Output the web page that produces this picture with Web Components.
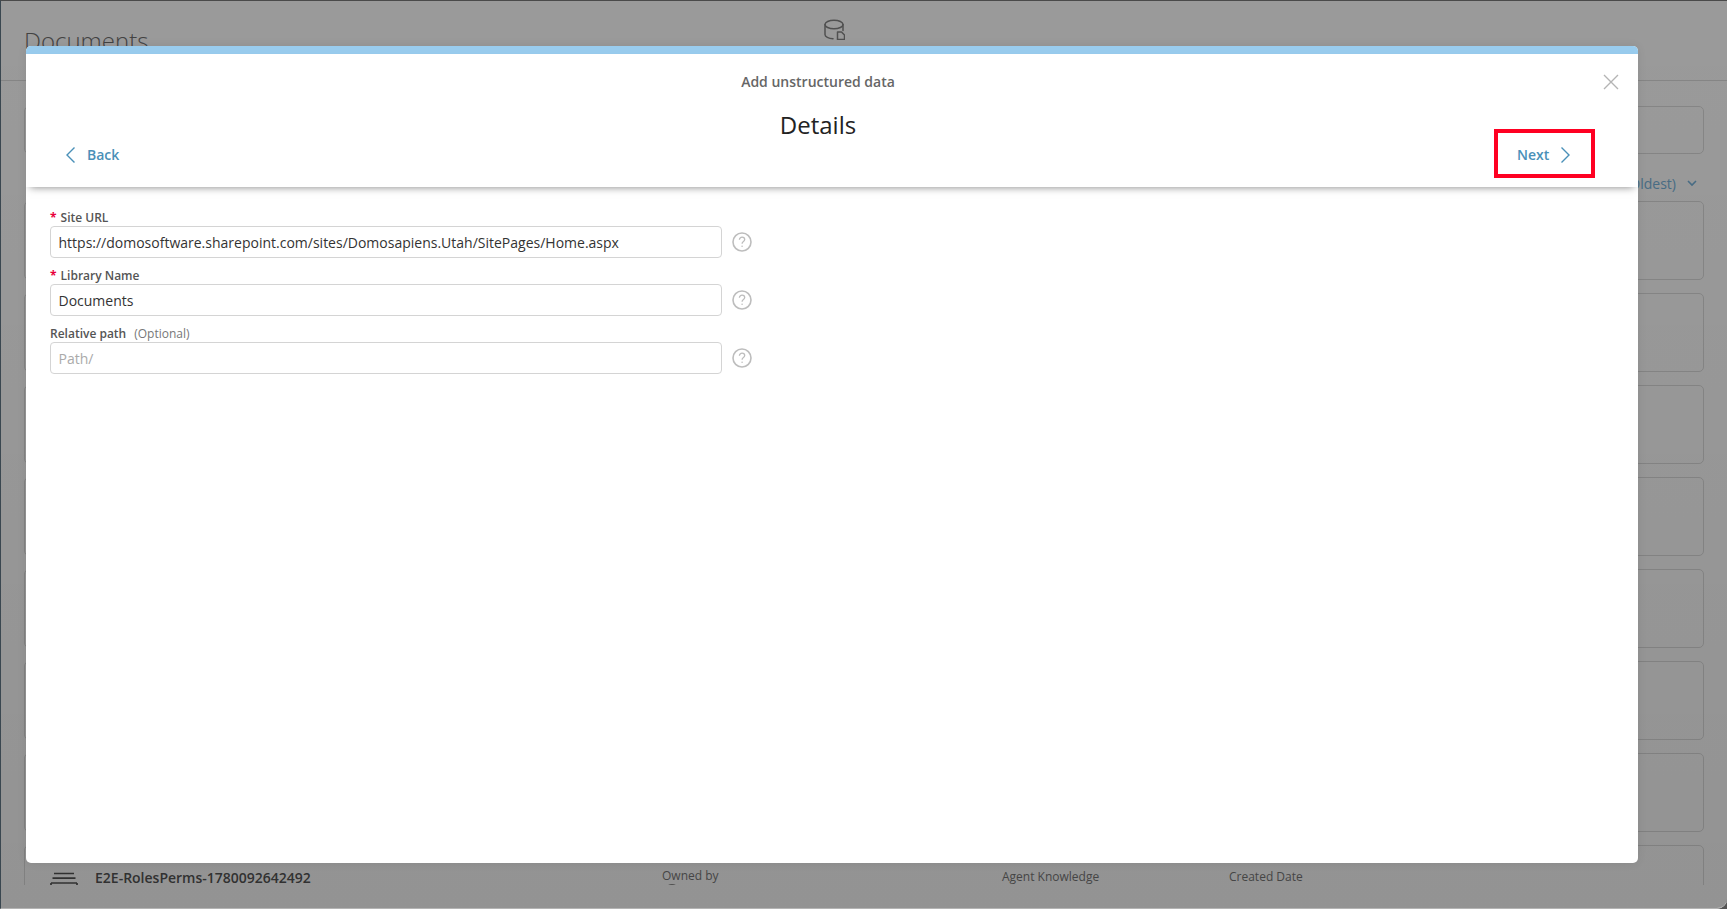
<!DOCTYPE html>
<html lang="en">
<head>
<meta charset="utf-8">
<title>Add unstructured data</title>
<style>
html,body{margin:0;padding:0;height:100%;overflow:hidden;background:#555;font-family:"Open Sans","Liberation Sans",sans-serif}
</style>
</head>
<body>
<app-window>
  <bg-page slot="page"></bg-page>
  <modal-dialog slot="modal" heading="Add unstructured data" title-text="Details">
    <form-field label="Site URL" required value="https://domosoftware.sharepoint.com/sites/Domosapiens.Utah/SitePages/Home.aspx"></form-field>
    <form-field label="Library Name" required value="Documents"></form-field>
    <form-field label="Relative path" optional="(Optional)" placeholder="Path/"></form-field>
  </modal-dialog>
</app-window>
<script>
function def(name, css, html){
  customElements.define(name, class extends HTMLElement{
    connectedCallback(){
      if(this.shadowRoot) return;
      const r=this.attachShadow({mode:'open'});
      r.innerHTML='<style>'+css+'</style>'+(typeof html==='function'?html(this):html);
    }
  });
}
const esc=s=>(s||'').replace(/&/g,'&amp;').replace(/</g,'&lt;');

def('app-window',`
:host{display:block;position:relative;width:1727px;height:909px;overflow:hidden;box-sizing:border-box;background:#fff;
  border-top:1px solid #4a4a4a;border-left:1px solid #3a4750;border-bottom:1px solid #b4b4b4;border-bottom-right-radius:10px;font-family:"Open Sans","Liberation Sans",sans-serif}
.scrim{position:absolute;inset:0;background:linear-gradient(rgba(0,0,0,.395),rgba(0,0,0,.425));display:flex;box-sizing:border-box;padding:45px 89px 45px 25px}
`,`<slot name="page"></slot><div class="scrim"><slot name="modal"></slot></div>`);

def('bg-page',`
:host{display:flex;flex-direction:column;height:884px;overflow:hidden;color:#222}
.top{height:79px;flex:none;border-bottom:1px solid #ddd;padding-left:23px;position:relative}
h1{margin:0;font-size:24px;font-weight:300;line-height:34px;padding-top:23px;color:#6e6e6e}
.dbicon{position:absolute;left:822px;top:17px;width:22px;height:22px}
.main{flex:1;padding:25px 23px 0;display:flex;flex-direction:column}
.tool{height:48px;flex:none;box-sizing:border-box;border:1px solid #ddd;border-radius:5px}
.sort{height:47px;flex:none;display:flex;justify-content:flex-end;align-items:center;gap:11px;padding:12px 7px 0 0;font-size:14px;color:#78b4dc;box-sizing:border-box;line-height:20px}
.list{display:flex;flex-direction:column;gap:13px}
`,`
<div class="top"><h1>Documents</h1>
<svg class="dbicon" viewBox="0 0 22 22" fill="none" stroke="#858585" stroke-width="1.5" stroke-linecap="round" stroke-linejoin="round">
<ellipse cx="11" cy="6.5" rx="9" ry="4.3"/><path d="M2 6.5v10c0 2.2 3.6 4 8 4.2"/><path d="M20 6.5v6"/>
<path d="M14.5 21.6v-7.6h4l3 3v4.6z"/></svg></div>
<div class="main">
<div class="tool"></div>
<div class="sort"><span>Sort by (Newest to Oldest)</span><svg width="10" height="7" viewBox="0 0 10 7" fill="none" stroke="#78b4dc" stroke-width="1.6"><path d="M1 1l4 4 4-4"/></svg></div>
<div class="list">
<doc-card></doc-card><doc-card></doc-card><doc-card></doc-card><doc-card></doc-card><doc-card></doc-card><doc-card></doc-card><doc-card></doc-card>
<doc-card name="E2E-RolesPerms-1780092642492"></doc-card>
</div></div>`);

def('doc-card',`
:host{display:block;height:79px;flex:none;box-sizing:border-box;border:1px solid #ddd;border-radius:5px;color:#555}
.row{display:grid;grid-template-columns:45px 567px 340px 227px 1fr;padding:20px 0 0 25px;align-items:center;height:24px}
.name{font-size:14px;font-weight:600;line-height:20px}
.meta{font-size:12px;line-height:18px;color:#787878;position:relative;top:-1px}
.owned{top:-2px}
svg{display:block;margin-top:2px}
.av{position:absolute;left:2px;top:17px;width:16px;height:16px;border-radius:50%;background:#888}
`,h=>{const n=h.getAttribute('name');return n?`<div class="row">
<svg width="28" height="14" viewBox="0 0 28 14" fill="none" stroke="#555" stroke-width="1.7"><path d="M4 1.5h20M2.5 6.2h23M1 11h26M1 11v3M27 11v3"/></svg>
<span class="name">${esc(n)}</span><span class="meta owned">Owned by<i class="av"></i></span><span class="meta">Agent Knowledge</span><span class="meta">Created Date</span></div>`:''});

def('modal-dialog',`
:host{display:flex;flex-direction:column;flex:1;min-width:0;background:#fff;border-radius:5px;overflow:hidden;box-shadow:0 0 10px rgba(0,0,0,.08)}
.bar{height:8px;flex:none;background:#99ccee}
header{position:relative;z-index:1;height:133px;flex:none;box-sizing:border-box;display:grid;grid-template-columns:1fr auto 1fr;grid-template-rows:auto 1fr;padding-right:28px;background:#fff;box-shadow:0 4px 8px -4px rgba(0,0,0,.5)}
.sub{grid-column:1/4;text-align:center;font-size:14px;font-weight:600;color:#666;line-height:20px;padding-top:18px}
.ttl{grid-column:2;margin:0;font-size:24px;font-weight:400;color:#222;line-height:32px;padding-top:17px;text-align:center}
.nav{display:flex;align-items:center;font-size:14px;font-weight:600;color:#4a90b8;line-height:20px;text-decoration:none;box-sizing:border-box;height:49px;padding-top:3px;gap:12px;align-self:end;grid-row:2}
.back{grid-column:1;justify-self:start;margin:0 0 9px 40px}
.next{grid-column:3;justify-self:end;width:101px;margin:0 15px 9px 0;border:4px solid #ff0022;padding-left:19px;padding-top:2px}
.close{position:absolute;right:19px;top:20px;width:16px;height:16px}
main{flex:1;padding:23px 24px 0;display:flex;flex-direction:column;gap:10px}
`,h=>`
<div class="bar"></div>
<header>
<div class="sub">${esc(h.getAttribute('heading'))}</div>
<h2 class="ttl">${esc(h.getAttribute('title-text'))}</h2>
<a class="nav back"><svg width="9" height="16" viewBox="0 0 9 16" fill="none" stroke="#4a90b8" stroke-width="1.4"><path d="M8.5.5L1 8l7.5 7.5"/></svg><span>Back</span></a>
<a class="nav next"><span>Next</span><svg width="9" height="16" viewBox="0 0 9 16" fill="none" stroke="#4a90b8" stroke-width="1.4"><path d="M.5.5L8 8l-7.5 7.5"/></svg></a>
<svg class="close" viewBox="0 0 16 16" fill="none" stroke="#b4b4b4" stroke-width="1.4"><path d="M1 1l14 14M15 1L1 15"/></svg>
</header>
<main><slot></slot></main>`);

def('form-field',`
:host{display:grid;grid-template-columns:672px 20px;column-gap:10px;grid-template-rows:16px 32px;color:#333}
.lab{grid-column:1/3;font-size:12px;font-weight:600;line-height:16px;color:#555;display:flex;align-items:center}
.star{color:#e8003c;font-weight:700;margin-right:4px;font-size:12px}
.opt{font-weight:400;color:#777;margin-left:8px}
.box{box-sizing:border-box;border:1px solid #d4d4d4;border-radius:4px;height:32px;padding:0 8px 0 7.5px;font-size:14px;line-height:32px;white-space:nowrap;overflow:hidden;color:#333}
.ph{color:#aaa}
svg{align-self:center;display:block}
`,h=>{const v=h.getAttribute('value'),p=h.getAttribute('placeholder');return `
<div class="lab">${h.hasAttribute('required')?'<span class="star">*</span>':''}<span>${esc(h.getAttribute('label'))}</span>${h.getAttribute('optional')?`<span class="opt">${esc(h.getAttribute('optional'))}</span>`:''}</div>
<div class="box ${v?'':'ph'}">${esc(v||p)}</div>
<svg width="20" height="20" viewBox="0 0 20 20" fill="none" stroke="#bdbdbd"><circle cx="10" cy="10" r="9" stroke-width="1.6"/><path d="M7.4 7.8c0-1.6 1.2-2.6 2.7-2.6s2.6 1 2.6 2.3c0 2-2.6 2-2.6 4.2" stroke-width="1.3"/><circle cx="10.1" cy="14.3" r=".8" fill="#bdbdbd" stroke="none"/></svg>`});
</script>
</body>
</html>
